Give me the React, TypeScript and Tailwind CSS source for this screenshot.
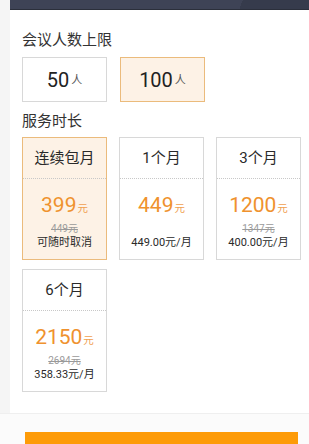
import React from "react";

type Plan = {
  title: string;
  price: string;
  old?: string;
  note: string;
  active?: boolean;
};

const PLANS: Plan[] = [
  { title: "连续包月", price: "399", old: "449元", note: "可随时取消", active: true },
  { title: "1个月", price: "449", note: "449.00元/月" },
  { title: "3个月", price: "1200", old: "1347元", note: "400.00元/月" },
  { title: "6个月", price: "2150", old: "2694元", note: "358.33元/月" },
];

const FONT = "font-['Roboto','Noto_Sans_CJK_SC',sans-serif]";

function PlanCard({ plan }: { plan: Plan }) {
  return (
    <div
      className={`w-[85px] h-[123px] flex flex-col border ${
        plan.active ? "bg-[#fdf2e6] border-[#ebbb7c]" : "bg-white border-[#d8d8d8]"
      }`}
    >
      <div className="h-[41px] shrink-0 flex items-center justify-center border-b border-dotted border-[#c8c8c8] text-[15px] text-[#2a2a2a]">
        {plan.title}
      </div>
      <div className="flex flex-col items-center pt-[13px]">
        <div className="h-[26px] flex items-baseline text-[#ef922e]">
          <span className="text-[21px] leading-[26px]">{plan.price}</span>
          <span className="text-[10.5px] ml-[1px] text-[#f0a050]">元</span>
        </div>
        <div className="mt-[4px] h-[13px] text-[10px] leading-[13px] text-[#9a9a9a] line-through">
          {plan.old ?? ""}
        </div>
        <div className="text-[11px] leading-[16px] text-[#2a2a2a]">{plan.note}</div>
      </div>
    </div>
  );
}

export default function App() {
  return (
    <div className={`w-[309px] h-[444px] overflow-hidden bg-[#f5f5f5] flex flex-col ${FONT}`}>
      {/* top bar */}
      <div className="ml-[10px] h-[10px] shrink-0 bg-[linear-gradient(110deg,#3e4356_77%,#363b4c_77%)] border-b border-[#2b2f3b]" />

      {/* panel */}
      <div className="ml-[10px] h-[403px] shrink-0 bg-white pl-[12px] pt-[20px]">
        <div className="text-[15px] leading-[20px] text-[#333]">会议人数上限</div>
        <div className="mt-[7px] flex gap-[13px]">
          <div className="w-[85px] h-[45px] flex items-center justify-center border border-[#d8d8d8] bg-white text-[#222]">
            <span className="text-[20px]">50</span>
            <span className="text-[11px] ml-[2px] mt-[4px] text-[#555]">人</span>
          </div>
          <div className="w-[85px] h-[45px] flex items-center justify-center border border-[#ebbb7c] bg-[#fdf2e6] text-[#222]">
            <span className="text-[20px]">100</span>
            <span className="text-[11px] ml-[2px] mt-[4px] text-[#555]">人</span>
          </div>
        </div>

        <div className="mt-[9px] text-[15px] leading-[20px] text-[#333]">服务时长</div>
        <div className="mt-[6px] grid grid-cols-[85px_85px_85px] gap-x-[12px] gap-y-[9px]">
          {PLANS.map((p) => (
            <PlanCard key={p.title} plan={p} />
          ))}
        </div>
      </div>

      {/* bottom */}
      <div className="flex-1 bg-[#fbfbfb] border-t border-[#efefef] pt-[18px] pl-[25px]">
        <div className="w-[273px] h-[40px] bg-[#fd9b08]" />
      </div>
    </div>
  );
}
